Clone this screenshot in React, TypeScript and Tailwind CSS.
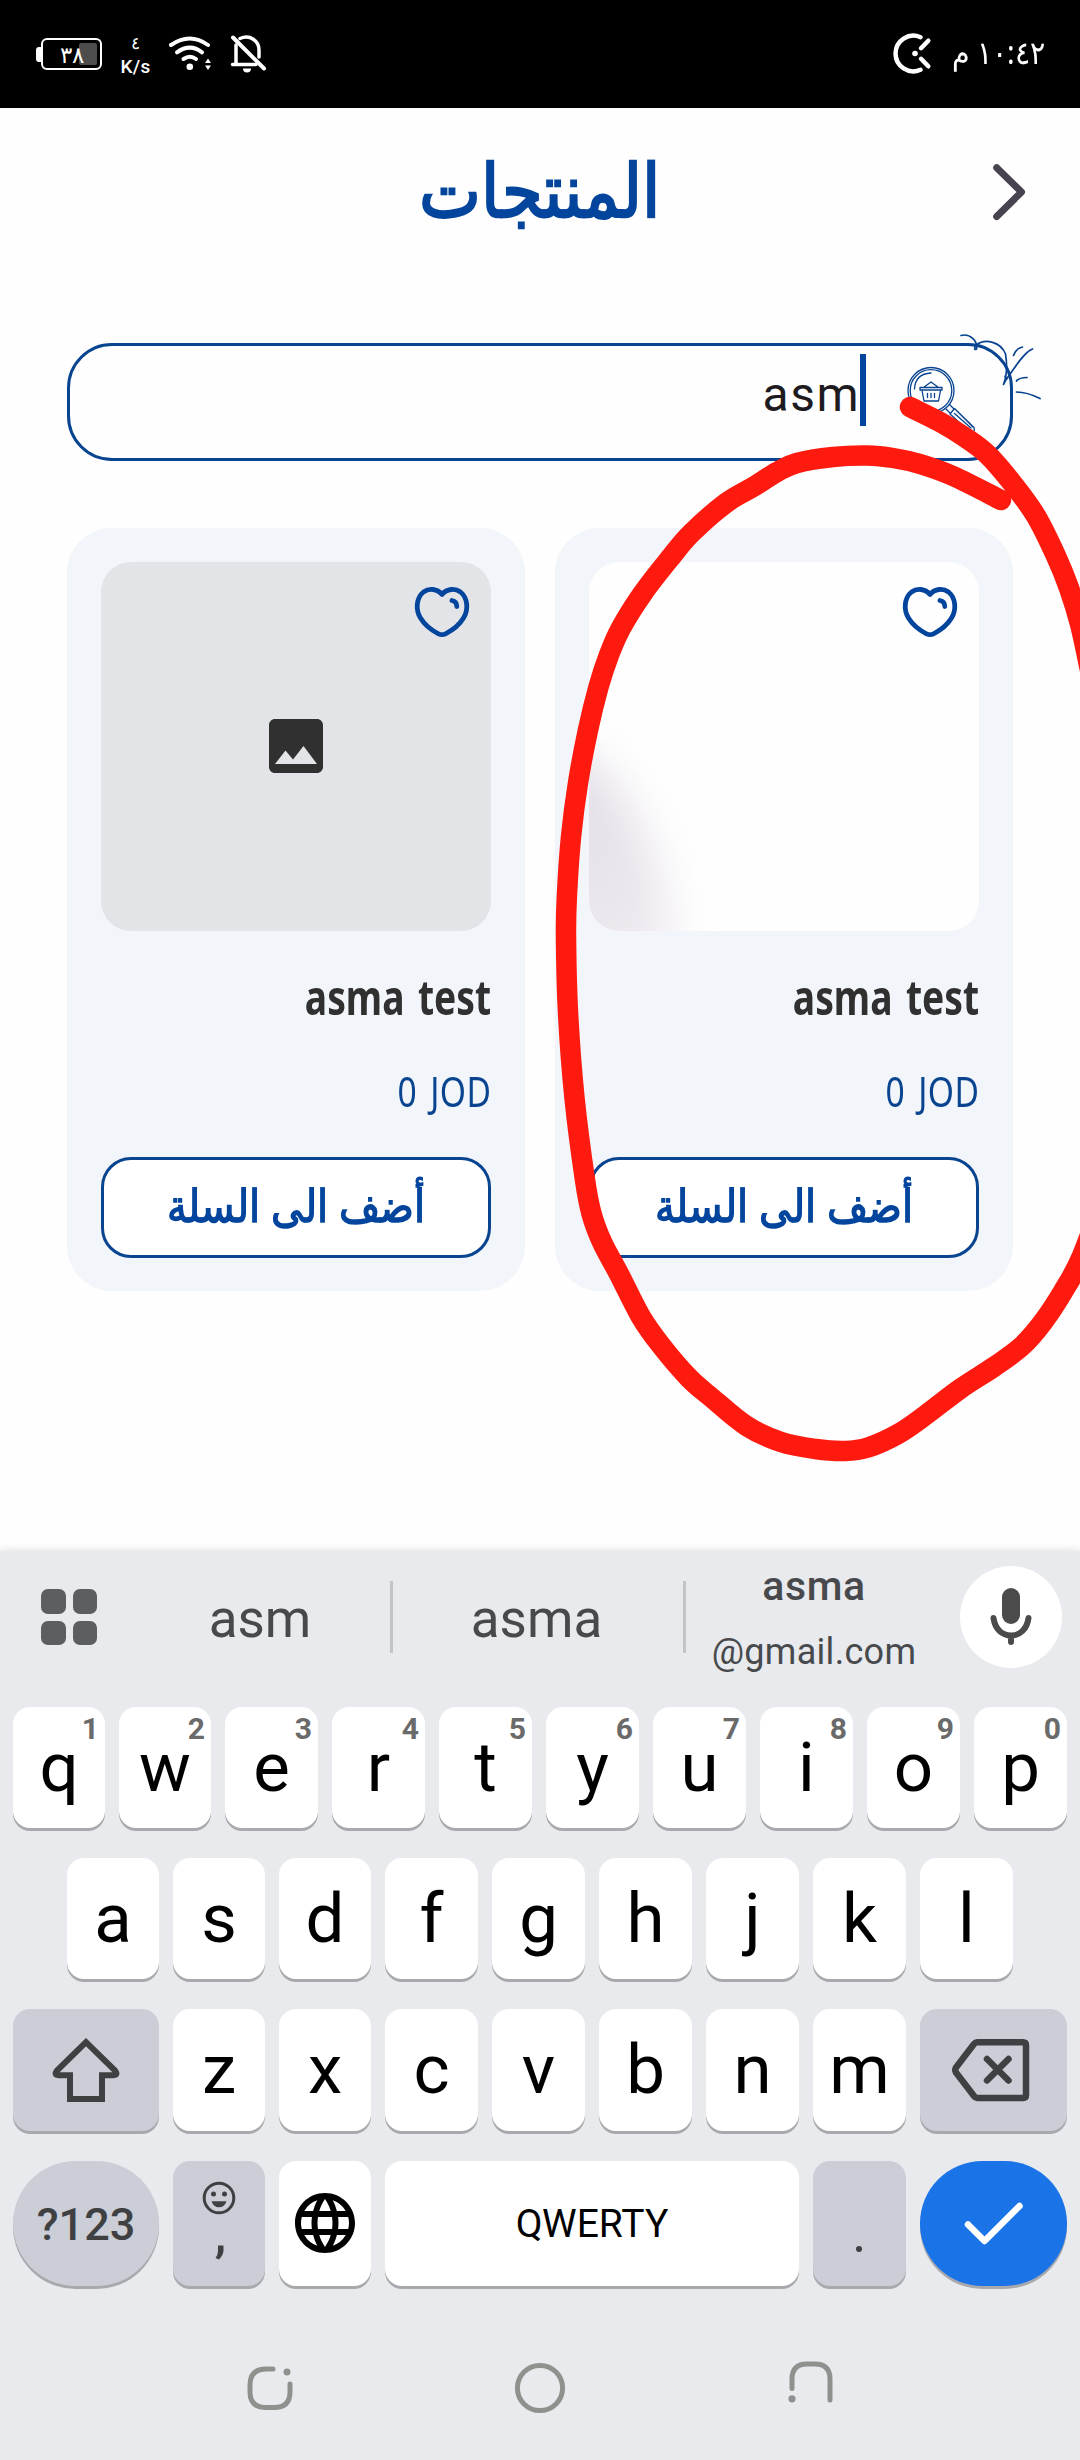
import type { ReactNode } from "react";
import { MdImage, MdLanguage } from "react-icons/md";

type Point = [number, number];

const STROKE_POINTS: Point[] = [
  [1001, 500], [953, 476], [920, 464], [893, 458], [867, 455.5], [833, 457], [797, 463], [777, 472], [753, 487],
  [726, 503], [691.5, 533], [671, 557], [643, 593], [621, 628], [609, 655], [598.5, 687], [588, 730],
  [578, 783], [571, 837], [567, 894], [566, 935], [568, 1012], [574.5, 1098], [585, 1180], [591.6, 1214],
  [602, 1242], [619, 1274], [641, 1317], [661.5, 1346], [689, 1378], [712, 1398], [746.6, 1426], [781, 1442],
  [815.5, 1449], [845, 1451], [868, 1447.5], [898, 1434], [925.7, 1415], [960, 1389], [994.5, 1366.5],
  [1022, 1346], [1043, 1322], [1063.4, 1291], [1082, 1256], [1108, 1185],
];

const TAIL_POINTS: Point[] = [
  [910, 407], [940, 422], [963, 436], [987, 454], [1013, 484], [1036, 516], [1056, 556], [1069, 588], [1080, 624], [1090, 670],
];

function smooth(p: Point[]): string {
  let d = `M${p[0][0]} ${p[0][1]}`;
  for (let i = 0; i < p.length - 1; i++) {
    const a = p[i - 1] ?? p[i];
    const b = p[i];
    const c = p[i + 1];
    const e = p[i + 2] ?? c;
    d += `C${b[0] + (c[0] - a[0]) / 6} ${b[1] + (c[1] - a[1]) / 6} ${c[0] - (e[0] - b[0]) / 6} ${c[1] - (e[1] - b[1]) / 6} ${c[0]} ${c[1]}`;
  }
  return d;
}

function StatusBar() {
  return (
    <header className="flex h-[108px] items-start justify-between bg-black text-white">
      <div className="flex items-start pl-[36px] pt-[34px]">
        <div className="flex items-center pt-[4px]">
          <span className="h-[15px] w-[5px] rounded-l-[3px] bg-white" />
          <div className="relative flex h-[32px] w-[61px] items-center justify-center rounded-[6px] border-[2.5px] border-white">
            <span className="absolute right-[3px] top-[3px] h-[22px] w-[18px] rounded-[2px] bg-[#4d4d4d]" />
            <span className="relative text-[23px] leading-none">٣٨</span>
          </div>
        </div>
        <div className="ml-[19px] flex w-[29px] flex-col items-center">
          <span className="h-[23px] text-[17px] leading-none">٤</span>
          <span className="whitespace-nowrap font-['Roboto'] text-[19px] font-medium leading-none tracking-[0.3px]">K/s</span>
        </div>
        <svg className="ml-[17px]" width="46" height="42" viewBox="167 34 46 42" fill="none" stroke="#fff" strokeLinecap="round">
          <path d="M171 45Q190 32 208 45" strokeWidth="4" />
          <path d="M177 52.3Q190 43 202 52.3" strokeWidth="4" />
          <path d="M183.5 59Q190 54.5 196 59" strokeWidth="4" />
          <circle cx="189.8" cy="66.7" r="3.3" fill="#fff" stroke="none" />
          <path d="M205 63l3-4.500 3 4.500zM205 65.500l3 4.500 3-4.500z" fill="#fff" stroke="none" />
        </svg>
        <svg className="ml-[16px]" width="40" height="42" viewBox="229 34 40 42" fill="none" stroke="#fff" strokeWidth="3.500" strokeLinecap="round">
          <path d="M240 38.500C250 34 259 41 259 50V57M236 45V64M232.500 64.500H256" />
          <path d="M233 37.500L264 68.500" strokeWidth="4" />
          <path d="M243 68.500h8a4 4 0 0 1-8 0z" fill="#fff" stroke="none" />
        </svg>
      </div>
      <div className="flex items-start pr-[35px] pt-[32px]" dir="rtl">
        <span className="mt-[4px] origin-right scale-x-[0.89] whitespace-nowrap text-[32px] leading-none">١٠:٤٢ م</span>
        <svg className="mr-[7px]" width="40" height="44" viewBox="892 32 40 44" fill="none" stroke="#fff" strokeWidth="4.500" strokeLinecap="round">
          <path d="M919.500 37.200A17.800 17.800 0 1 0 919.500 69.800" />
          <path d="M920 48.200L927.300 40.700M920 58.800L927.300 66.300" />
          <circle cx="914" cy="53.500" r="2.800" fill="#fff" stroke="none" />
        </svg>
      </div>
    </header>
  );
}

function TitleBar() {
  return (
    <div className="relative flex h-[235px] items-start justify-center">
      <h1 className="mt-[44px] scale-x-[0.89] whitespace-nowrap text-[74px] font-bold leading-none text-[#03459d]" dir="rtl">المنتجات</h1>
      <svg className="absolute right-[51px] top-[52px]" width="40" height="64" viewBox="989 160 40 64" fill="none" stroke="#48434f" strokeWidth="7" strokeLinecap="round" strokeLinejoin="round">
        <path d="M996.700 167.700L1021.500 192L996.700 216.500" />
      </svg>
    </div>
  );
}

function SearchField() {
  return (
    <div className="relative mx-[67px] flex h-[118px] items-start justify-end rounded-[45px] border-[3px] border-[#08448f]">
      <span className="mt-[25px] font-['Roboto'] text-[48px] leading-none tracking-[1.5px] text-[#1d1b20]">asm</span>
      <span className="mr-[144px] mt-[8px] h-[72px] w-[6px] bg-[#03459d]" />
      <svg className="absolute -right-[33px] -top-[16px]" width="143" height="110" viewBox="900 330 143 110" fill="none" stroke="#08448f" strokeWidth="1.300" strokeLinecap="round" strokeLinejoin="round">
        <g>
          <circle cx="931" cy="390.500" r="23" />
          <circle cx="931" cy="390.500" r="20.800" />
          <path d="M914.500 389C915 379 921 373.500 931 373" />
          <path d="M920 387.500H942V390H920zM922 390.500L924 401H938.500L940.500 390.500M923.500 387.500L931 382L938.500 387.500M927.500 393.500V397.500M931 393.500V397.500M934.500 393.500V397.500" />
          <path d="M946 409L950 413M949.500 404.500L954 409M950 414L954.500 408.500L974 427.500Q975.500 433 970.500 432.500L950 414M954.500 413.500L971 428M956.500 410.500L973 427" />
        </g>
        <g strokeWidth="1.700">
          <path d="M961 335.500C970 333 978 341 976.500 349C974 351 974 346.500 976.500 345C985 338 1001 342 1005.500 354C1007.500 366 1006 378 1003.500 384.500C1009 377 1003 372 1006 380C1013 370 1024 352 1032.500 349" />
          <path d="M1013.500 355.500C1015 351 1018 348 1022.500 347M1016.500 381C1019 378 1023 377.500 1027 377.500M1016.500 392C1025 392 1033 395 1040 398.500" />
        </g>
      </svg>
    </div>
  );
}

function Heart() {
  return (
    <svg className="absolute right-[19px] top-[22px]" width="60" height="56" viewBox="412 584 60 56" fill="none" stroke="#03459d" strokeWidth="4.800" strokeLinecap="round" strokeLinejoin="round">
      <path d="M442 594.500C437 588.500 429 588 423.500 592C416 598 415.500 610 420.500 618C425 625.500 433 631 438.500 633.800Q442 635.500 445.500 633.800C451 631 459 625.500 463.500 618C468.500 610 468 598 460.500 592C455 588 447 588.500 442 594.500Z" />
      <path d="M452 600.500Q456.800 601.500 456.800 606.500" />
    </svg>
  );
}

function ProductCard({ children }: { children: ReactNode }) {
  return (
    <article className="flex h-[763px] w-[458px] flex-col rounded-[45px] bg-[#f2f5fa] p-[34px] pb-[33px]">
      {children}
      <h2 className="mt-[39px] h-[52px] origin-right scale-x-[0.76] self-end whitespace-nowrap font-['Noto_Sans'] text-[49px] font-bold leading-[52px] text-[#303030] [word-spacing:5px]">asma test</h2>
      <p className="mt-[44px] h-[50px] origin-right scale-x-[0.8] self-end whitespace-nowrap font-['Noto_Sans'] text-[42px] leading-[50px] tracking-[0.5px] text-[#08448f] [word-spacing:5px]">0 JOD</p>
      <button className="mt-auto flex h-[101px] items-start justify-center rounded-[30px] border-[3px] border-[#08448f] bg-white">
        <span className="mt-[22px] scale-x-[0.885] whitespace-nowrap text-[45px] font-bold leading-none text-[#03459d]" dir="rtl">أضف الى السلة</span>
      </button>
    </article>
  );
}

type KeyProps = { label: ReactNode; hint?: string; size?: string; tone?: string };

function Key({ label, hint, size = "w-[93px]", tone = "bg-white" }: KeyProps) {
  return (
    <div className={`relative flex h-full shrink-0 items-center justify-center rounded-[17px] pb-[1px] font-['Roboto'] text-[69px] leading-none text-black shadow-[0_3px_0_#a8a9ac] ${size} ${tone}`}>
      {label}
      {hint && <span className="absolute right-[6px] top-[7px] text-[30px] font-bold leading-none text-[#6a6a6a]">{hint}</span>}
    </div>
  );
}

function Suggestions() {
  return (
    <div className="flex h-[156px] items-start font-['Roboto'] text-[#47494c]">
      <div className="ml-[41px] mt-[38px] grid grid-cols-2 gap-x-[7px] gap-y-[7px]">
        {[0, 1, 2, 3].map((i) => (
          <span key={i} className="h-[24.5px] w-[24.5px] rounded-[7px] bg-[#5d5e60]" />
        ))}
      </div>
      <span className="ml-[33px] mt-[42px] w-[260px] text-center text-[53px] leading-none">asm</span>
      <span className="mt-[30px] h-[72px] w-[3px] bg-[#c3c4c8]" />
      <span className="mt-[42px] w-[290px] pr-[3px] text-center text-[53px] leading-none">asma</span>
      <span className="mt-[30px] h-[72px] w-[3px] bg-[#c3c4c8]" />
      <div className="mt-[15px] flex w-[256px] flex-col items-center leading-none">
        <span className="text-[41px] font-medium tracking-[0.6px]">asma</span>
        <span className="mt-[27px] text-[36px] tracking-[0.3px]">@gmail.com</span>
      </div>
      <span className="ml-[18px] mt-[15px] flex h-[102px] w-[102px] items-center justify-center rounded-full bg-white">
        <svg width="46" height="62" viewBox="988 1585 46 62" fill="none" stroke="#4b4b4b" strokeWidth="6" strokeLinecap="round">
          <rect x="1002" y="1587" width="18" height="36" rx="9" fill="#4b4b4b" stroke="none" />
          <path d="M993.500 1617C995 1628 1002 1634.500 1011 1634.500S1027 1628 1028.500 1617M1011 1635V1641" />
        </svg>
      </span>
    </div>
  );
}

const TOP_ROW = "qwertyuiop".split("");
const HOME_ROW = "asdfghjkl".split("");
const LOWER_ROW = "zxcvbnm".split("");

function Keyboard() {
  return (
    <section className="flex h-[909px] flex-col bg-[#e8eaed] shadow-[0_-1px_8px_rgba(0,0,0,0.12)]">
      <Suggestions />
      <div className="flex h-[121px] gap-[14px] px-[13px]">
        {TOP_ROW.map((k, i) => (
          <Key key={k} label={k} hint={String((i + 1) % 10)} size={i < 2 ? "w-[92px]" : "w-[93px]"} />
        ))}
      </div>
      <div className="mt-[30px] flex h-[121px] gap-[14px] px-[67px]">
        {HOME_ROW.map((k, i) => (
          <Key key={k} label={k} size={i < 3 ? "w-[92px]" : "w-[93px]"} />
        ))}
      </div>
      <div className="mt-[30px] flex h-[122px] gap-[14px] px-[13px]">
        <Key
          size="w-[146px]"
          tone="bg-[#cbced6]"
          label={
            <svg width="74" height="72" viewBox="49 2033 74 72" fill="none" stroke="#3f4042" strokeWidth="6" strokeLinejoin="round">
              <path d="M86 2041.200L57 2069.500Q53.500 2074 58.500 2074.200H70V2098H102V2074.200H113.500Q118.500 2074 115 2069.500Z" strokeLinejoin="miter" />
              <path d="M70 2090V2098H102V2090" />
            </svg>
          }
        />
        {LOWER_ROW.map((k, i) => (
          <Key key={k} label={k} size={i < 2 ? "w-[92px]" : "w-[93px]"} />
        ))}
        <Key
          size="w-[147px]"
          tone="bg-[#cbced6]"
          label={
            <svg className="mr-[5px]" width="82" height="68" viewBox="950 2036 82 68" fill="none" stroke="#3f4042" strokeWidth="6.500" strokeLinecap="round" strokeLinejoin="round">
              <path d="M977 2042.200H1023Q1026 2042.200 1026 2045V2095Q1026 2098 1023 2098H977Q975.500 2098 974 2096L956 2072.500Q954.500 2070 956 2067.500L974 2044Q975.500 2042.200 977 2042.200Z" />
              <path d="M987 2059L1008.500 2080.500M1008.500 2059L987 2080.500" />
            </svg>
          }
        />
      </div>
      <div className="mt-[30px] flex h-[125px] gap-[14px] px-[13px]">
        <div className="flex w-[146px] items-center justify-center rounded-[63px] bg-[#cbced6] pt-[2px] font-['Roboto'] text-[45px] font-medium leading-none text-[#3f4042] shadow-[0_3px_0_#a8a9ac]">?123</div>
        <Key
          size="w-[92px]"
          tone="bg-[#cbced6]"
          label={
            <svg width="40" height="84" viewBox="198.500 2181.500 40 84" fill="none" stroke="#3f4042">
              <circle cx="218.500" cy="2198.500" r="14.800" strokeWidth="3" />
              <circle cx="213" cy="2194.500" r="2.500" fill="#3f4042" stroke="none" />
              <circle cx="224" cy="2194.500" r="2.500" fill="#3f4042" stroke="none" />
              <path d="M211 2201.800h15q-2 6-7.500 6t-7.500-6z" fill="#3f4042" stroke="none" />
              <path d="M217.500 2246H223V2251.500Q222.500 2256 218.500 2260L215 2258.500Q217.500 2255 217.500 2251.500Z" fill="#3f4042" stroke="none" />
            </svg>
          }
        />
        <Key size="w-[92px]" label={<MdLanguage className="h-[72px] w-[72px]" />} />
        <Key size="w-[414px]" label={<span className="pt-[3px] text-[39px]">QWERTY</span>} />
        <Key tone="bg-[#cbced6]" label={<span className="mr-[1px] mt-[51px] h-[6px] w-[6px] rounded-full bg-[#3f4042]" />} />
        <div className="flex w-[147px] items-center justify-center rounded-[63px] bg-[#1b73e8] shadow-[0_3px_0_#a8a9ac]">
          <svg width="62" height="44" viewBox="962 2201.500 62 44" fill="none" stroke="#fff" strokeWidth="6.500" strokeLinecap="round" strokeLinejoin="round">
            <path d="M967 2224L983.500 2240.500L1018.500 2205.500" />
          </svg>
        </div>
      </div>
      <nav className="mt-[74px] flex items-start justify-between px-[244px]">
        <svg width="52" height="56" viewBox="244 2360 52 56" fill="none" stroke="#8f918f" strokeWidth="5" strokeLinecap="round">
          <path d="M273 2369H266Q250 2369 250 2385V2392Q250 2407.500 266 2407.500H274Q290 2407.500 290 2392V2384" />
          <circle cx="287" cy="2372" r="3.500" fill="#8f918f" stroke="none" />
        </svg>
        <svg width="56" height="56" viewBox="512 2360 56 56" fill="none" stroke="#8f918f" strokeWidth="5">
          <circle cx="540" cy="2388" r="22.600" />
        </svg>
        <svg width="52" height="56" viewBox="784 2360 52 56" fill="none" stroke="#8f918f" strokeWidth="5" strokeLinecap="round">
          <path d="M792 2388.500V2379Q792 2364 807 2364H815Q830 2364 830 2379V2400" />
          <circle cx="792" cy="2398.800" r="3.600" fill="#8f918f" stroke="none" />
        </svg>
      </nav>
    </section>
  );
}

export default function App() {
  return (
    <main className="relative flex h-[2460px] w-[1080px] flex-col overflow-hidden bg-[#fefefe] font-['Noto_Sans',sans-serif]">
      <StatusBar />
      <TitleBar />
      <SearchField />
      <div className="mx-[67px] mt-[67px] flex gap-[30px]">
        <ProductCard>
          <div className="relative flex h-[369px] shrink-0 items-center justify-center rounded-[30px] bg-[#e3e4e8] pb-[1px]">
            <MdImage className="h-[72px] w-[72px] text-[#303030]" />
            <Heart />
          </div>
        </ProductCard>
        <ProductCard>
          <div className="relative h-[369px] shrink-0 overflow-hidden rounded-[30px] bg-[#fefefe]">
            <div className="absolute -left-[80px] top-[180px] h-[320px] w-[155px] -rotate-[15deg] rounded-[50%] bg-gradient-to-b from-[#e2dde6] via-[#ebe6ed] to-[#f7f0f5] blur-[20px]" />
            <Heart />
          </div>
        </ProductCard>
      </div>
      <div className="mt-auto">
        <Keyboard />
      </div>
      <svg className="pointer-events-none absolute inset-0" width="1080" height="2460" viewBox="0 0 1080 2460" fill="none" stroke="#ff1a10" strokeWidth="20.500" strokeLinecap="round" strokeLinejoin="round">
        <path d={smooth(STROKE_POINTS)} />
        <path d={smooth(TAIL_POINTS)} />
      </svg>
    </main>
  );
}
